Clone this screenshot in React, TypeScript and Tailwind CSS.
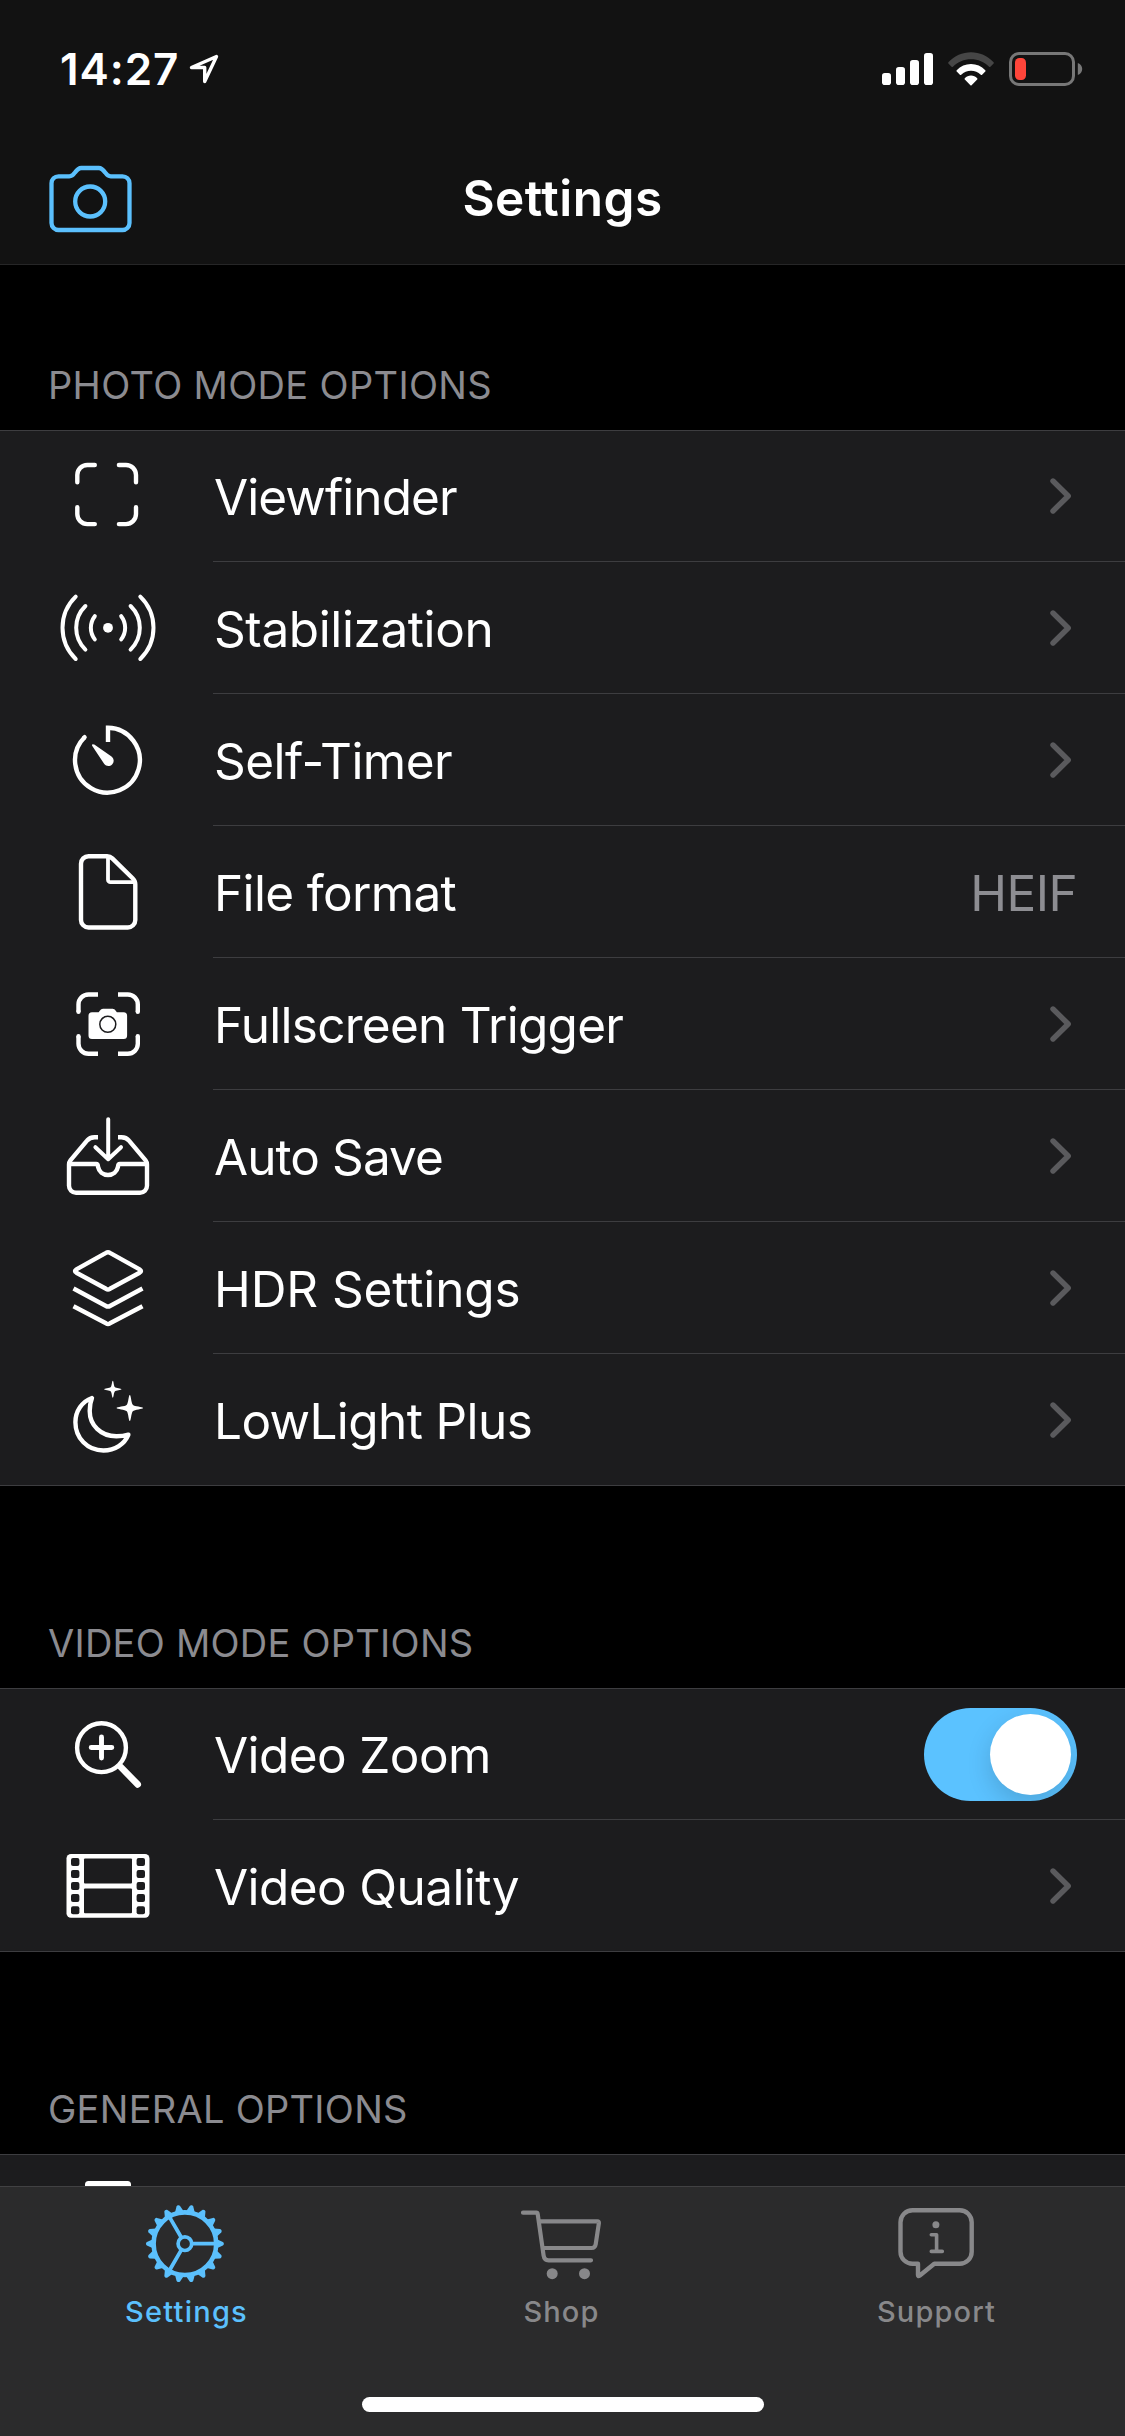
import React from 'react';

type IconProps = { children: React.ReactNode };

// Icon cell on the left of every row, drawn on a 213x132 grid
function RowIcon({ children }: IconProps) {
  return (
    <svg
      viewBox="0 0 213 132"
      className="w-[213px] h-[132px] shrink-0"
      fill="none"
      stroke="white"
      strokeWidth="4.4"
      strokeLinecap="round"
      strokeLinejoin="round"
    >
      {children}
    </svg>
  );
}

function ViewfinderIcon() {
  return (
    <RowIcon>
      <path d="M94.8 35H87.3a10 10 0 0 0-10 10v7.2M118.9 35h7.1a10 10 0 0 1 10 10v7.2M136 77.2v6.9a10 10 0 0 1-10 10h-7.1M94.8 94.1h-7.5a10 10 0 0 1-10-10v-6.9" />
    </RowIcon>
  );
}

function StabilizationIcon() {
  return (
    <RowIcon>
      <circle cx="108" cy="65.8" r="4.9" fill="white" stroke="none" />
      <path
        strokeWidth="4"
        d="M121.200 54.2a19 19 0 0 1 0 23.2M130.600 44a30.4 30.4 0 0 1 0 43.6M140.300 34.6a43.5 43.5 0 0 1 0 62.4M94.8 54.2a19 19 0 0 0 0 23.2M85.4 44a30.4 30.4 0 0 0 0 43.6M75.7 34.6a43.5 43.5 0 0 0 0 62.4"
      />
    </RowIcon>
  );
}

function TimerIcon() {
  return (
    <RowIcon>
      <path strokeLinejoin="miter" strokeLinecap="butt" d="M108 48V33.8A32.4 32.4 0 1 1 84.6 43.2" />
      <path d="M84.6 43.2l-.4.4" />
      <path
        d="M92.3 50.6c.6-.7 1.3-.5 2 0l17.2 11.8c2.8 2.3 2.8 5.8.6 8-2.3 2.3-5.9 2.2-8-.6L92.3 52c-.4-.5-.4-1 0-1.4z"
        fill="white"
        stroke="none"
      />
    </RowIcon>
  );
}

function FileIcon() {
  return (
    <RowIcon>
      <path d="M88.5 30.2h18.6c2.2 0 3.7.7 5.2 2.2l20.3 19.8c1.8 1.8 2.7 3.6 2.7 6V94a7.5 7.5 0 0 1-7.5 7.5H88.5A7.5 7.5 0 0 1 81 94V37.7a7.5 7.5 0 0 1 7.5-7.5z" />
      <path strokeWidth="3.8" strokeLinecap="butt" d="M108 31v22.7a2.5 2.5 0 0 0 2.5 2.5H134" />
    </RowIcon>
  );
}

function TriggerIcon() {
  return (
    <RowIcon>
      <path
        strokeLinecap="butt"
        d="M98 36.5h-9.5a10 10 0 0 0-10 10v7.3M118 36.5h9.8a10 10 0 0 1 10 10v7.3M137.8 78.2v7.6a10 10 0 0 1-10 10H118M98 95.8h-9.5a10 10 0 0 1-10-10v-7.6"
      />
      <path d="M78.5 53.5v.3M137.8 53.5v.3M137.8 78.2v.3M78.5 78.2v.3" />
      <path
        d="M92 54.3h6.2c1.2-.2 2.2-3.6 4.8-3.6h9.6c2.6 0 3.6 3.4 4.8 3.6h6.2a3.5 3.5 0 0 1 3.5 3.5v19.7a3.5 3.5 0 0 1-3.5 3.5H92a3.5 3.5 0 0 1-3.5-3.5V57.8a3.5 3.5 0 0 1 3.5-3.5z"
        fill="white"
        stroke="none"
      />
      <circle cx="107.8" cy="66.3" r="8" stroke="#1c1c1e" strokeWidth="1.5" />
    </RowIcon>
  );
}

function InboxIcon() {
  return (
    <RowIcon>
      <path
        strokeLinecap="butt"
        d="M98 47.2h-3.4c-3.6 0-5.6.8-7.6 3.4L70.6 70.2c-1 1.3-1.6 2.6-1.6 4.4v21.2a7 7 0 0 0 7 7h64a7 7 0 0 0 7-7V74.6c0-1.8-.6-3.1-1.6-4.4L129 50.6c-2-2.6-4-3.4-7.6-3.4H118"
      />
      <path strokeLinecap="butt" d="M69 74h27.2c1.8 0 1.6 1.4 1.9 3 1 4.8 4.8 8 9.9 8s8.9-3.2 9.9-8c.3-1.6.1-3 1.9-3H147" />
      <path strokeWidth="4" d="M108.2 29.2V68M95.4 57.2l12.8 12 12.8-12" />
    </RowIcon>
  );
}

function LayersIcon() {
  return (
    <RowIcon>
      <path d="M106 30.800q2-1.2 4 0l29.600 16.500q2.8 1.7 0 3.4L110 66.8q-2 1.2-4 0L76.4 50.7q-2.8-1.7 0-3.4z" />
      <path strokeLinecap="butt" d="M73.5 66.500l32.5 17.500q2 1.2 4 0l32.500-17.500M73.5 84.300l32.500 17q2 1.2 4 0l32.5-17" />
    </RowIcon>
  );
}

function MoonIcon() {
  return (
    <RowIcon>
      <path d="M92 44C82 47.5 75.4 57.3 75.4 68.2c0 15.8 12 28.3 28 28.3 11.6 0 21.2-6.5 25-15.9-4 1.3-8 1.7-12 1.7-15.8 0-26.7-11.3-26.7-25.3 0-4.9.6-8.800 2.3-13z" />
      <path
        d="M129.8 41c1.2 0 1.3 7.5 3 9.7 1.6 1.9 10.2 2 10.2 3.300s-8.600 1.400-10.200 3.300c-1.700 2.200-1.800 9.700-3 9.700s-1.300-7.500-3-9.700c-1.600-1.900-10.200-2-10.200-3.300s8.600-1.400 10.200-3.300c1.700-2.200 1.800-9.700 3-9.700z"
        fill="white"
        stroke="none"
      />
      <path
        d="M112.8 26.8c.8 0 .9 4.9 2 6.3 1.1 1.3 6.7 1.4 6.7 2.2s-5.6.9-6.7 2.2c-1.1 1.4-1.2 6.3-2 6.3s-.9-4.9-2-6.3c-1.1-1.3-6.7-1.4-6.7-2.2s5.6-.9 6.7-2.2c1.1-1.4 1.2-6.3 2-6.3z"
        fill="white"
        stroke="none"
      />
    </RowIcon>
  );
}

function ZoomIcon() {
  return (
    <RowIcon>
      <circle cx="101.5" cy="59.7" r="24.4" />
      <path strokeWidth="4.9" d="M91.2 59.5h20.6M101.5 49v21" />
      <path strokeWidth="6.6" d="M120.5 78.7l17.2 17.7" />
    </RowIcon>
  );
}

function FilmIcon() {
  return (
    <RowIcon>
      <rect x="66.5" y="34" width="83" height="63.7" rx="4.5" fill="white" stroke="none" />
      <g fill="#1c1c1e" stroke="none">
        <rect x="84" y="38.6" width="48" height="24.8" rx="1" />
        <rect x="84" y="68.4" width="48" height="24.8" rx="1" />
        {[38, 50, 62, 74, 86.2].map((y) => (
          <React.Fragment key={y}>
            <rect x="71" y={y} width="8.4" height="8" rx="2" />
            <rect x="136.6" y={y} width="8.4" height="8" rx="2" />
          </React.Fragment>
        ))}
      </g>
    </RowIcon>
  );
}

function PhoneIcon() {
  return (
    <RowIcon>
      <rect x="87.5" y="29.6" width="41" height="72" rx="1" strokeWidth="5" />
    </RowIcon>
  );
}

function Chevron() {
  return (
    <svg
      viewBox="0 0 21 36"
      className="w-[21px] h-[36px] mr-[6px] mb-[2px]"
      fill="none"
      stroke="#5a5a5d"
      strokeWidth="5.4"
      strokeLinecap="round"
      strokeLinejoin="round"
    >
      <path d="M3 3l15.2 15L3 33" />
    </svg>
  );
}

function Toggle() {
  return (
    <div className="w-[153px] h-[93px] rounded-full bg-[#5bc2ff] p-[6px] flex justify-end overflow-hidden">
      <div className="w-[81px] h-[81px] rounded-full bg-white shadow-[0_9px_24px_rgba(0,0,0,0.15)]" />
    </div>
  );
}

type Item = {
  label: string;
  tracking: string;
  icon: React.ReactNode;
  right?: React.ReactNode;
};

const photoItems: Item[] = [
  { label: 'Viewfinder', tracking: 'tracking-[-0.93px]', icon: <ViewfinderIcon />, right: <Chevron /> },
  { label: 'Stabilization', tracking: 'tracking-[-0.4px]', icon: <StabilizationIcon />, right: <Chevron /> },
  { label: 'Self-Timer', tracking: 'tracking-[-0.53px]', icon: <TimerIcon />, right: <Chevron /> },
  {
    label: 'File format',
    tracking: 'tracking-[-0.65px]',
    icon: <FileIcon />,
    right: <span className="text-[#8d8d92] tracking-[-0.6px]">HEIF</span>,
  },
  { label: 'Fullscreen Trigger', tracking: 'tracking-[-0.75px]', icon: <TriggerIcon />, right: <Chevron /> },
  { label: 'Auto Save', tracking: 'tracking-[-0.93px]', icon: <InboxIcon />, right: <Chevron /> },
  { label: 'HDR Settings', tracking: 'tracking-[-0.1px]', icon: <LayersIcon />, right: <Chevron /> },
  { label: 'LowLight Plus', tracking: 'tracking-[-0.6px]', icon: <MoonIcon />, right: <Chevron /> },
];

const videoItems: Item[] = [
  { label: 'Video Zoom', tracking: 'tracking-[-0.6px]', icon: <ZoomIcon />, right: <Toggle /> },
  { label: 'Video Quality', tracking: 'tracking-[-0.6px]', icon: <FilmIcon />, right: <Chevron /> },
];

const generalItems: Item[] = [{ label: '', tracking: '', icon: <PhoneIcon /> }];

function Row({ item, last }: { item: Item; last: boolean }) {
  return (
    <div className="flex h-[132px] shrink-0">
      {item.icon}
      <div
        className={`flex-1 flex items-center justify-between pt-[2px] pl-px pr-[48px] border-b ${
          last ? 'border-transparent' : 'border-[#3d3d40]'
        }`}
      >
        <span className={`text-white whitespace-nowrap ${item.tracking}`}>{item.label}</span>
        {item.right}
      </div>
    </div>
  );
}

function Section({ title, titleClass, items }: { title: string; titleClass: string; items: Item[] }) {
  return (
    <section>
      <h2 className={`flex items-end pl-[48px] pb-[25px] text-[38px] leading-[40px] text-[#8b8b90] ${titleClass}`}>{title}</h2>
      <div className="bg-[#1c1c1e] border-y border-[#3d3d40] text-[49.5px] leading-[60px]">
        <div className="-my-px">
          {items.map((item, idx) => (
            <Row key={idx} item={item} last={idx === items.length - 1} />
          ))}
        </div>
      </div>
    </section>
  );
}

function StatusBar() {
  return (
    <div className="flex items-center justify-between h-[138px] pl-[60px] pr-[42px]">
      <div className="flex items-center">
        <span className="text-white text-[44px] leading-[54px] font-semibold tracking-[0.9px]">14:27</span>
        <svg viewBox="0 0 32 32" className="w-[32px] h-[32px] ml-[9px]" fill="none" stroke="white" strokeWidth="3.4" strokeLinejoin="round">
          <path d="M28.5 3.5L3.5 14.5h13.2v14z" />
        </svg>
      </div>
      <div className="flex items-center gap-[15px]">
        <svg viewBox="0 0 51 32" className="w-[51px] h-[32px]" fill="white">
          <rect x="0" y="20" width="9" height="12" rx="2.8" />
          <rect x="14" y="14" width="9" height="18" rx="2.8" />
          <rect x="28" y="7" width="9" height="25" rx="2.8" />
          <rect x="42" y="0" width="9" height="32" rx="2.8" />
        </svg>
        <svg viewBox="0 0 46 34" className="w-[46px] h-[34px]" fill="white">
          <path
            fill="#464646"
            d="M.4 10.2C6.5 3.8 14.4.2 23 .2s16.500 3.600 22.600 10c.4.4.4.9 0 1.300l-3.200 3.200c-.4.4-.9.4-1.300 0C36.2 9.8 30 7.2 23 7.2S9.8 9.8 4.900 14.700c-.4.4-.9.4-1.300 0L.4 11.500c-.4-.4-.4-.9 0-1.300z"
          />
          <path d="M8.7 18.3c3.900-4 8.800-6.200 14.300-6.200s10.400 2.200 14.300 6.200c.4.4.4.9 0 1.300l-3.200 3.200c-.4.4-.9.4-1.300 0-2.700-2.600-6-4-9.800-4s-7.100 1.400-9.800 4c-.4.4-.9.4-1.300 0l-3.200-3.200c-.4-.4-.4-.9 0-1.300z" />
          <path d="M16.8 26.3c1.700-1.700 3.800-2.700 6.200-2.700s4.500 1 6.200 2.700c.4.4.4.9 0 1.300l-5.600 5.600c-.4.4-.8.4-1.200 0l-5.600-5.600c-.4-.4-.4-.9 0-1.300z" />
        </svg>
        <svg viewBox="0 0 74 34" className="w-[74px] h-[34px]">
          <rect x="1.5" y="1.5" width="63" height="31" rx="8.5" fill="none" stroke="#777" strokeWidth="3" />
          <rect x="6" y="6" width="11" height="22" rx="4.5" fill="#ff453a" />
          <path d="M68.8 11c3 1.200 4.400 3.500 4.400 6s-1.400 4.800-4.400 6z" fill="#777" />
        </svg>
      </div>
    </div>
  );
}

function Header() {
  return (
    <header className="h-[265px] shrink-0 bg-[#121212] border-b border-[#262627]">
      <StatusBar />
      <div className="grid grid-cols-[1fr_auto_1fr] items-center h-[120px]">
        <svg
          viewBox="0 0 84 68"
          className="w-[84px] h-[68px] ml-[49px] mt-[2px]"
          fill="none"
          stroke="#5bc0fd"
          strokeWidth="4.3"
          strokeLinejoin="round"
        >
          <path d="M9.5 11.3h10.800c3 0 4-1.300 5.500-3.600C27.9 4.7 29.3 3 32.3 3h17.500c3 0 4.400 1.700 6.500 4.700 1.500 2.300 2.500 3.600 5.500 3.600h11.700a7 7 0 0 1 7 7V58a7 7 0 0 1-7 7h-64a7 7 0 0 1-7-7V18.300a7 7 0 0 1 7-7z" />
          <circle cx="41.2" cy="36.5" r="15" />
        </svg>
        <h1 className="text-white text-[49.5px] leading-[60px] font-semibold tracking-[0.49px]">Settings</h1>
      </div>
    </header>
  );
}

const TEETH = 18;

function GearIcon() {
  return (
    <g transform="translate(42.9 43.7)">
      <circle r="31.3" strokeWidth="4.6" />
      <circle r="6.8" strokeWidth="3.7" />
      {[0, 120, 240].map((angle) => (
        <path key={angle} transform={`rotate(${angle})`} strokeWidth="3.8" d="M8 0h23" />
      ))}
      {Array.from({ length: TEETH }, (_, i) => (
        <path
          key={i}
          transform={`rotate(${(360 / TEETH) * i})`}
          d="M32.5-4.3l5.500 2.500c1.300.7 1.300 2.900 0 3.600l-5.500 2.500z"
          fill="currentColor"
          stroke="none"
        />
      ))}
    </g>
  );
}

function CartIcon() {
  return (
    <g strokeWidth="4.2">
      <path d="M6 12.7h13.300q1.200 0 1.400 1.300l5.900 41.500q.7 4.800 5 4.800H74" />
      <path d="M22 21.4h58.500q1.600 0 1.400 1.600l-3.200 21.300q-.6 3.700-4 3.700H26" />
      <circle cx="35.2" cy="73.7" r="5.5" fill="currentColor" stroke="none" />
      <circle cx="67.5" cy="73.7" r="5.5" fill="currentColor" stroke="none" />
    </g>
  );
}

function SupportIcon() {
  return (
    <g>
      <path
        strokeWidth="4.4"
        d="M20.5 10.2h47.200a12 12 0 0 1 12 12v29.600a12 12 0 0 1-12 12H42.300L27.500 75.700q-1.500 1-1.500-.8V63.800h-5.500a12 12 0 0 1-12-12V22.200a12 12 0 0 1 12-12z"
      />
      <circle cx="43.9" cy="24.7" r="3.5" fill="currentColor" stroke="none" />
      <path strokeWidth="3.6" d="M39.3 34.7h5.300v16.700M39.3 51.4h11" />
    </g>
  );
}

const tabs = [
  { label: 'Settings', tracking: 'tracking-[1.23px]', icon: <GearIcon />, active: true },
  { label: 'Shop', tracking: 'tracking-[1.1px]', icon: <CartIcon />, active: false },
  { label: 'Support', tracking: 'tracking-[1.12px]', icon: <SupportIcon />, active: false },
];

function TabBar() {
  return (
    <nav className="h-[250px] shrink-0 bg-[#2b2b2c] border-t border-[#414143] flex flex-col justify-between">
      <div className="flex pt-[13px]">
        {tabs.map((tab) => (
          <div
            key={tab.label}
            className={`flex-1 flex flex-col items-center gap-[4px] pr-[2px] ${tab.active ? 'text-[#5bc0fd]' : 'text-[#88888a]'}`}
          >
            <svg
              viewBox="0 0 90 90"
              className="w-[90px] h-[90px]"
              fill="none"
              stroke="currentColor"
              strokeLinecap="round"
              strokeLinejoin="round"
            >
              {tab.icon}
            </svg>
            <span className={`text-[29px] leading-[36px] font-medium ${tab.tracking}`}>{tab.label}</span>
          </div>
        ))}
      </div>
      <div className="w-[402px] h-[15px] mb-[24px] mx-auto rounded-full bg-white" />
    </nav>
  );
}

export default function App() {
  return (
    <div className="w-[1125px] h-[2436px] bg-black flex flex-col overflow-hidden font-['Inter',sans-serif]">
      <Header />
      <main className="flex-1 min-h-0 overflow-hidden">
        <Section title="PHOTO MODE OPTIONS" titleClass="h-[165px] tracking-[0.33px]" items={photoItems} />
        <Section title="VIDEO MODE OPTIONS" titleClass="h-[202px] tracking-[0.25px]" items={videoItems} />
        <Section title="GENERAL OPTIONS" titleClass="h-[202px] tracking-[0.27px]" items={generalItems} />
      </main>
      <TabBar />
    </div>
  );
}
